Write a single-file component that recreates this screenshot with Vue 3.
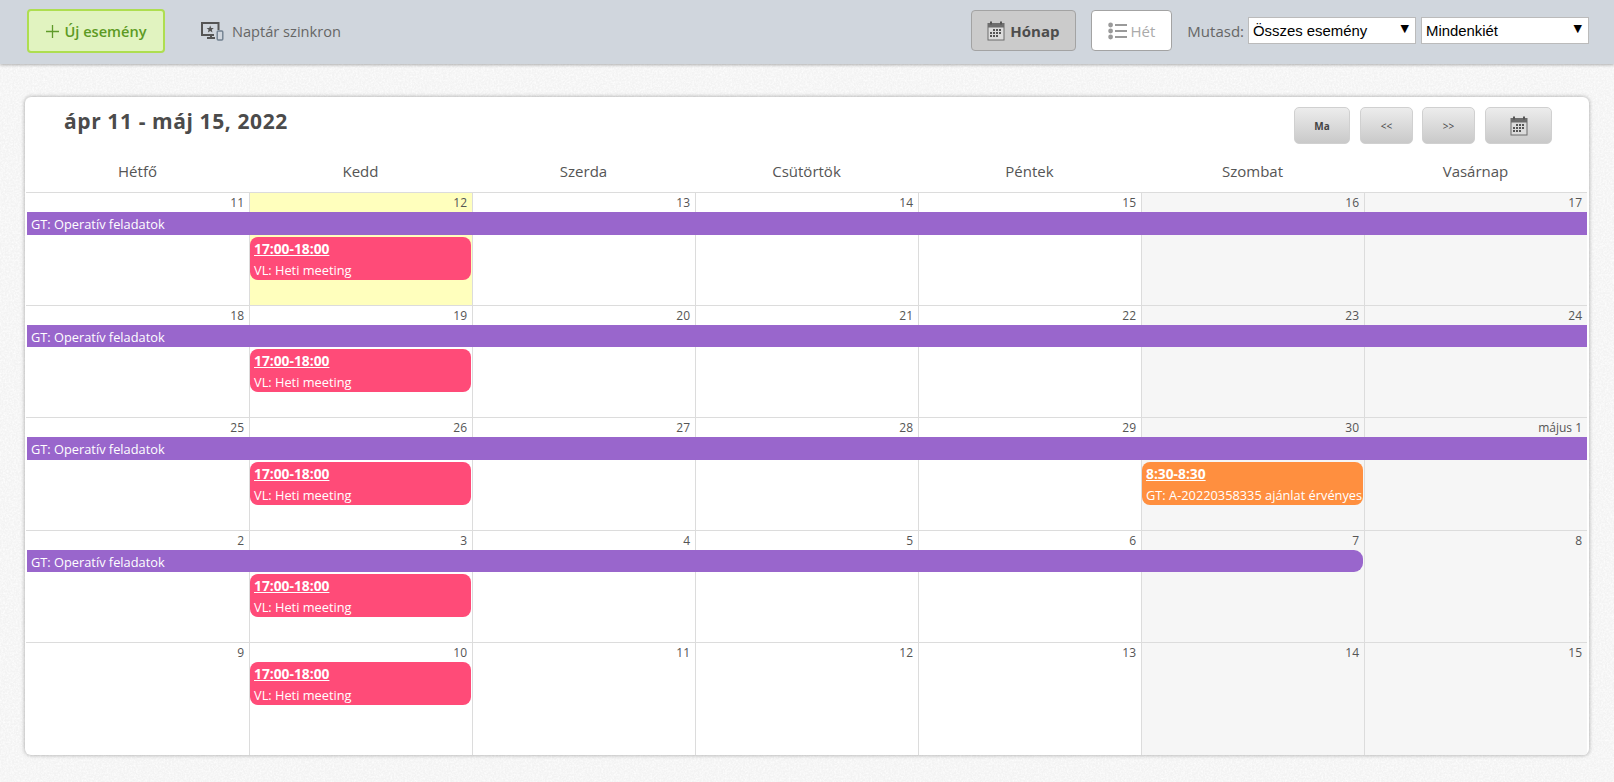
<template>
  <div class="page">
    <svg class="grain" width="100%" height="100%" aria-hidden="true">
      <filter id="noise">
        <feTurbulence type="fractalNoise" baseFrequency="0.55" numOctaves="3" seed="4" />
        <feColorMatrix type="matrix" values="0 0 0 0 1  0 0 0 0 1  0 0 0 0 1  1.6 0 0 0 -0.55" />
      </filter>
      <rect width="100%" height="100%" filter="url(#noise)" />
    </svg>
    <svg class="defs" width="0" height="0" aria-hidden="true">
      <symbol id="cal" viewBox="0 0 18 20">
        <rect x="0.5" y="2" width="17" height="17.5" fill="#6d6d6d" />
        <rect x="3" y="0.5" width="2" height="3" fill="#555" />
        <rect x="13" y="0.5" width="2" height="3" fill="#555" />
        <rect x="1.5" y="6.5" width="15" height="12" fill="#dcdcdc" />
        <g fill="#555">
          <rect x="6" y="8" width="2" height="2" /><rect x="9" y="8" width="2" height="2" /><rect x="12" y="8" width="2" height="2" />
          <rect x="3" y="11" width="2" height="2" /><rect x="6" y="11" width="2" height="2" /><rect x="9" y="11" width="2" height="2" /><rect x="12" y="11" width="2" height="2" />
          <rect x="3" y="14" width="2" height="2" /><rect x="6" y="14" width="2" height="2" /><rect x="9" y="14" width="2" height="2" />
        </g>
      </symbol>
    </svg>

    <header class="topbar">
      <button class="new-btn">
        <svg width="15" height="15" viewBox="0 0 15 15"><path d="M7.5 1v13M1 7.5h13" stroke="#5f9a2a" stroke-width="1.3" fill="none" /></svg>
        Új esemény
      </button>
      <div class="sync">
        <svg width="24" height="20" viewBox="0 0 24 20">
          <path d="M14 14H2V2h16.5v7" fill="none" stroke="#555" stroke-width="2" />
          <path d="M10.2 4.5l1 2.5 2.6.1-2 1.7.7 2.6-2.3-1.5-2.3 1.5.7-2.6-2-1.7 2.6-.1z" fill="#555" />
          <path d="M7 17h8M11 14v3" stroke="#555" stroke-width="2" fill="none" />
          <rect x="17.2" y="10" width="5.6" height="9" rx="1" fill="none" stroke="#71808f" stroke-width="1.4" />
        </svg>
        <span>Naptár szinkron</span>
      </div>
      <div class="views">
        <button class="view-btn active">
          <svg class="view-cal" width="18" height="20"><use href="#cal" /></svg>
          Hónap
        </button>
        <button class="view-btn">
          <svg width="19" height="18" viewBox="0 0 19 18">
            <g fill="#9a9a9a">
              <circle cx="2.6" cy="3" r="2.4" /><circle cx="2.6" cy="9" r="2.4" /><circle cx="2.6" cy="15" r="2.4" />
              <rect x="7" y="2" width="12" height="2" /><rect x="7" y="8" width="12" height="2" /><rect x="7" y="14" width="12" height="2" />
            </g>
          </svg>
          Hét
        </button>
      </div>
      <label class="show-label">Mutasd:</label>
      <div v-for="sel in selects" :key="sel" class="select-wrap">
        <select class="select"><option>{{ sel }}</option></select>
        <span class="select-arrow">▼</span>
      </div>
    </header>

    <main class="card">
      <div class="card-head">
        <h1 class="title">ápr 11 - máj 15, 2022</h1>
        <div class="nav">
          <button class="nav-btn today">Ma</button>
          <button class="nav-btn arrows">&lt;&lt;</button>
          <button class="nav-btn arrows">&gt;&gt;</button>
          <button class="nav-btn picker"><svg width="18" height="20"><use href="#cal" /></svg></button>
        </div>
      </div>

      <div class="weekdays">
        <div v-for="d in weekdays" :key="d" class="weekday">{{ d }}</div>
      </div>

      <div v-for="week in weeks" :key="week.days[0]" class="week">
        <div
          v-for="(day, i) in week.days"
          :key="day"
          class="day"
          :class="{ weekend: i > 4, today: day === '12' }"
          :style="{ gridColumn: i + 1 }"
        >{{ day }}</div>
        <div
          v-if="week.bar"
          class="bar"
          :class="{ ends: week.bar < 7 }"
          :style="{ gridColumn: '1 / span ' + week.bar }"
        >GT: Operatív feladatok</div>
        <div class="event pink" :class="{ 'no-bar': !week.bar }">
          <div class="event-time">17:00-18:00</div>
          <div class="event-name">VL: Heti meeting</div>
        </div>
        <div v-if="week.extra" class="event orange">
          <div class="event-time">8:30-8:30</div>
          <div class="event-name">GT: A-20220358335 ajánlat érvényes</div>
        </div>
      </div>
    </main>
  </div>
</template>

<script setup>
const selects = ['Összes esemény', 'Mindenkiét']
const weekdays = ['Hétfő', 'Kedd', 'Szerda', 'Csütörtök', 'Péntek', 'Szombat', 'Vasárnap']
const weeks = [
  { days: ['11', '12', '13', '14', '15', '16', '17'], bar: 7 },
  { days: ['18', '19', '20', '21', '22', '23', '24'], bar: 7 },
  { days: ['25', '26', '27', '28', '29', '30', 'május 1'], bar: 7, extra: true },
  { days: ['2', '3', '4', '5', '6', '7', '8'], bar: 6 },
  { days: ['9', '10', '11 ', '12 ', '13 ', '14 ', '15 '], bar: 0 }
]
</script>

<style>
html, body {
  margin: 0;
  background: #f3f3f3;
}
</style>

<style scoped>
.page {
  position: relative;
  height: 782px;
  overflow: hidden;
  font-family: "Open Sans", "Noto Sans", sans-serif;
  color: #555;
}

.grain {
  position: absolute;
  inset: 0;
}

.defs {
  position: absolute;
}

.topbar {
  position: relative;
  display: flex;
  align-items: center;
  height: 64px;
  box-sizing: border-box;
  padding: 0 25px 3px 27px;
  background: #d0d6dd;
  box-shadow: 0 1px 3px rgba(0, 0, 0, 0.3);
}

button {
  font-family: inherit;
  cursor: pointer;
}

.new-btn {
  display: flex;
  align-items: center;
  justify-content: center;
  gap: 4px;
  width: 138px;
  height: 44px;
  margin-top: 1px;
  padding: 0;
  background: #e1f3c0;
  border: 2px solid #aede50;
  border-radius: 4px;
  color: #5c9a24;
  font-size: 14.6px;
  font-weight: 600;
}

.sync {
  display: flex;
  align-items: center;
  gap: 8px;
  margin-left: 35px;
  margin-top: 1px;
  font-size: 14.6px;
  color: #666;
}

.views {
  display: flex;
  gap: 15px;
  margin-left: auto;
}

.view-btn {
  display: flex;
  align-items: center;
  justify-content: center;
  gap: 3px;
  width: 81px;
  height: 41px;
  padding: 0;
  background: #fff;
  border: 1px solid #a3a3a3;
  border-radius: 4px;
  color: #aaa;
  font-size: 15px;
}

.view-btn.active {
  width: 105px;
  padding-right: 1px;
  background: #cbcbcb;
  color: #4d4d4d;
  font-weight: 700;
}

.view-cal {
  margin-right: 2px;
}

.show-label {
  margin-left: 15px;
  margin-right: 4px;
  font-size: 15px;
  color: #666;
}

.select-wrap {
  position: relative;
  width: 168px;
  height: 27px;
  margin-right: 5px;
}

.select-wrap:last-child {
  margin-right: 0;
}

.select {
  width: 100%;
  height: 100%;
  padding: 0 0 0 4px;
  appearance: none;
  background: #fff;
  border: 1px solid #bbb;
  border-radius: 0;
  color: #000;
  font-family: "Liberation Sans", Arial, sans-serif;
  font-size: 14.9px;
}

.select-arrow {
  position: absolute;
  top: 5px;
  right: 7px;
  font-family: "DejaVu Sans", sans-serif;
  font-size: 11px;
  color: #000;
  pointer-events: none;
}

.card {
  position: relative;
  width: 1564px;
  height: 658px;
  box-sizing: border-box;
  margin: 33px 0 0 25px;
  padding: 0 1px;
  background: #fff;
  border-radius: 6px;
  box-shadow: 0 0 4px rgba(0, 0, 0, 0.35);
  overflow: hidden;
}

.card-head {
  display: flex;
  justify-content: space-between;
  align-items: flex-start;
  height: 47px;
  padding: 10px 36px 0 38px;
  box-sizing: border-box;
}

.title {
  margin: 0;
  padding-top: 1px;
  font-size: 21px;
  line-height: 26px;
  font-weight: 700;
  letter-spacing: 0.6px;
  color: #4b4b4b;
}

.nav {
  display: flex;
  gap: 9px;
}

.nav-btn {
  display: flex;
  align-items: center;
  justify-content: center;
  width: 53px;
  height: 37px;
  padding: 0;
  background: linear-gradient(#ececec, #c9c9c9);
  border: 1px solid #d0d0d0;
  border-radius: 5px;
  color: #444;
  font-size: 10px;
}

.nav-btn.today {
  width: 56px;
  margin-right: 1px;
  font-weight: 700;
}

.nav-btn.picker {
  width: 67px;
  margin-left: 1px;
}

.weekdays {
  display: grid;
  grid-template-columns: repeat(7, 223px);
  height: 48px;
  box-sizing: border-box;
  padding-top: 17px;
}

.weekday {
  text-align: center;
  font-size: 15px;
  line-height: 21px;
  color: #555;
}

.week {
  display: grid;
  grid-template-columns: repeat(7, 223px);
  grid-template-rows: 19px auto 1fr;
  width: 1561px;
  height: 112.5px;
  box-sizing: border-box;
  border-top: 1px solid #dcdcdc;
}

.day {
  grid-row: 1 / 4;
  padding-right: 5px;
  box-sizing: border-box;
  text-align: right;
  font-size: 12px;
  line-height: 19px;
  color: #555;
  border-left: 1px solid #dcdcdc;
}

.day:first-child {
  border-left: 0;
}

.day.weekend {
  background: #f6f6f6;
}

.day.today {
  background: #ffffbd;
}

.bar {
  grid-row: 2;
  height: 22.5px;
  margin: 0 0 0 1px;
  padding-left: 4px;
  background: #9966cc;
  color: #fff;
  font-size: 12.8px;
  line-height: 25px;
}

.bar.ends {
  margin-right: 1px;
  border-radius: 0 9px 9px 0;
}

.event {
  grid-row: 3;
  grid-column: 2;
  align-self: start;
  height: 43px;
  margin: 2px 1px 0 1px;
  padding-left: 4px;
  box-sizing: border-box;
  border-radius: 8px;
  color: #fff;
  white-space: nowrap;
  overflow: hidden;
}

.event.no-bar {
  grid-row: 2;
  margin-top: 0;
}

.pink {
  background: #ff4b78;
}

.orange {
  grid-column: 6;
  background: #ff8f3f;
}

.event-time {
  font-size: 13.8px;
  font-weight: 700;
  line-height: 23px;
  text-decoration: underline;
}

.event-name {
  font-size: 12.8px;
  line-height: 20px;
}
</style>
